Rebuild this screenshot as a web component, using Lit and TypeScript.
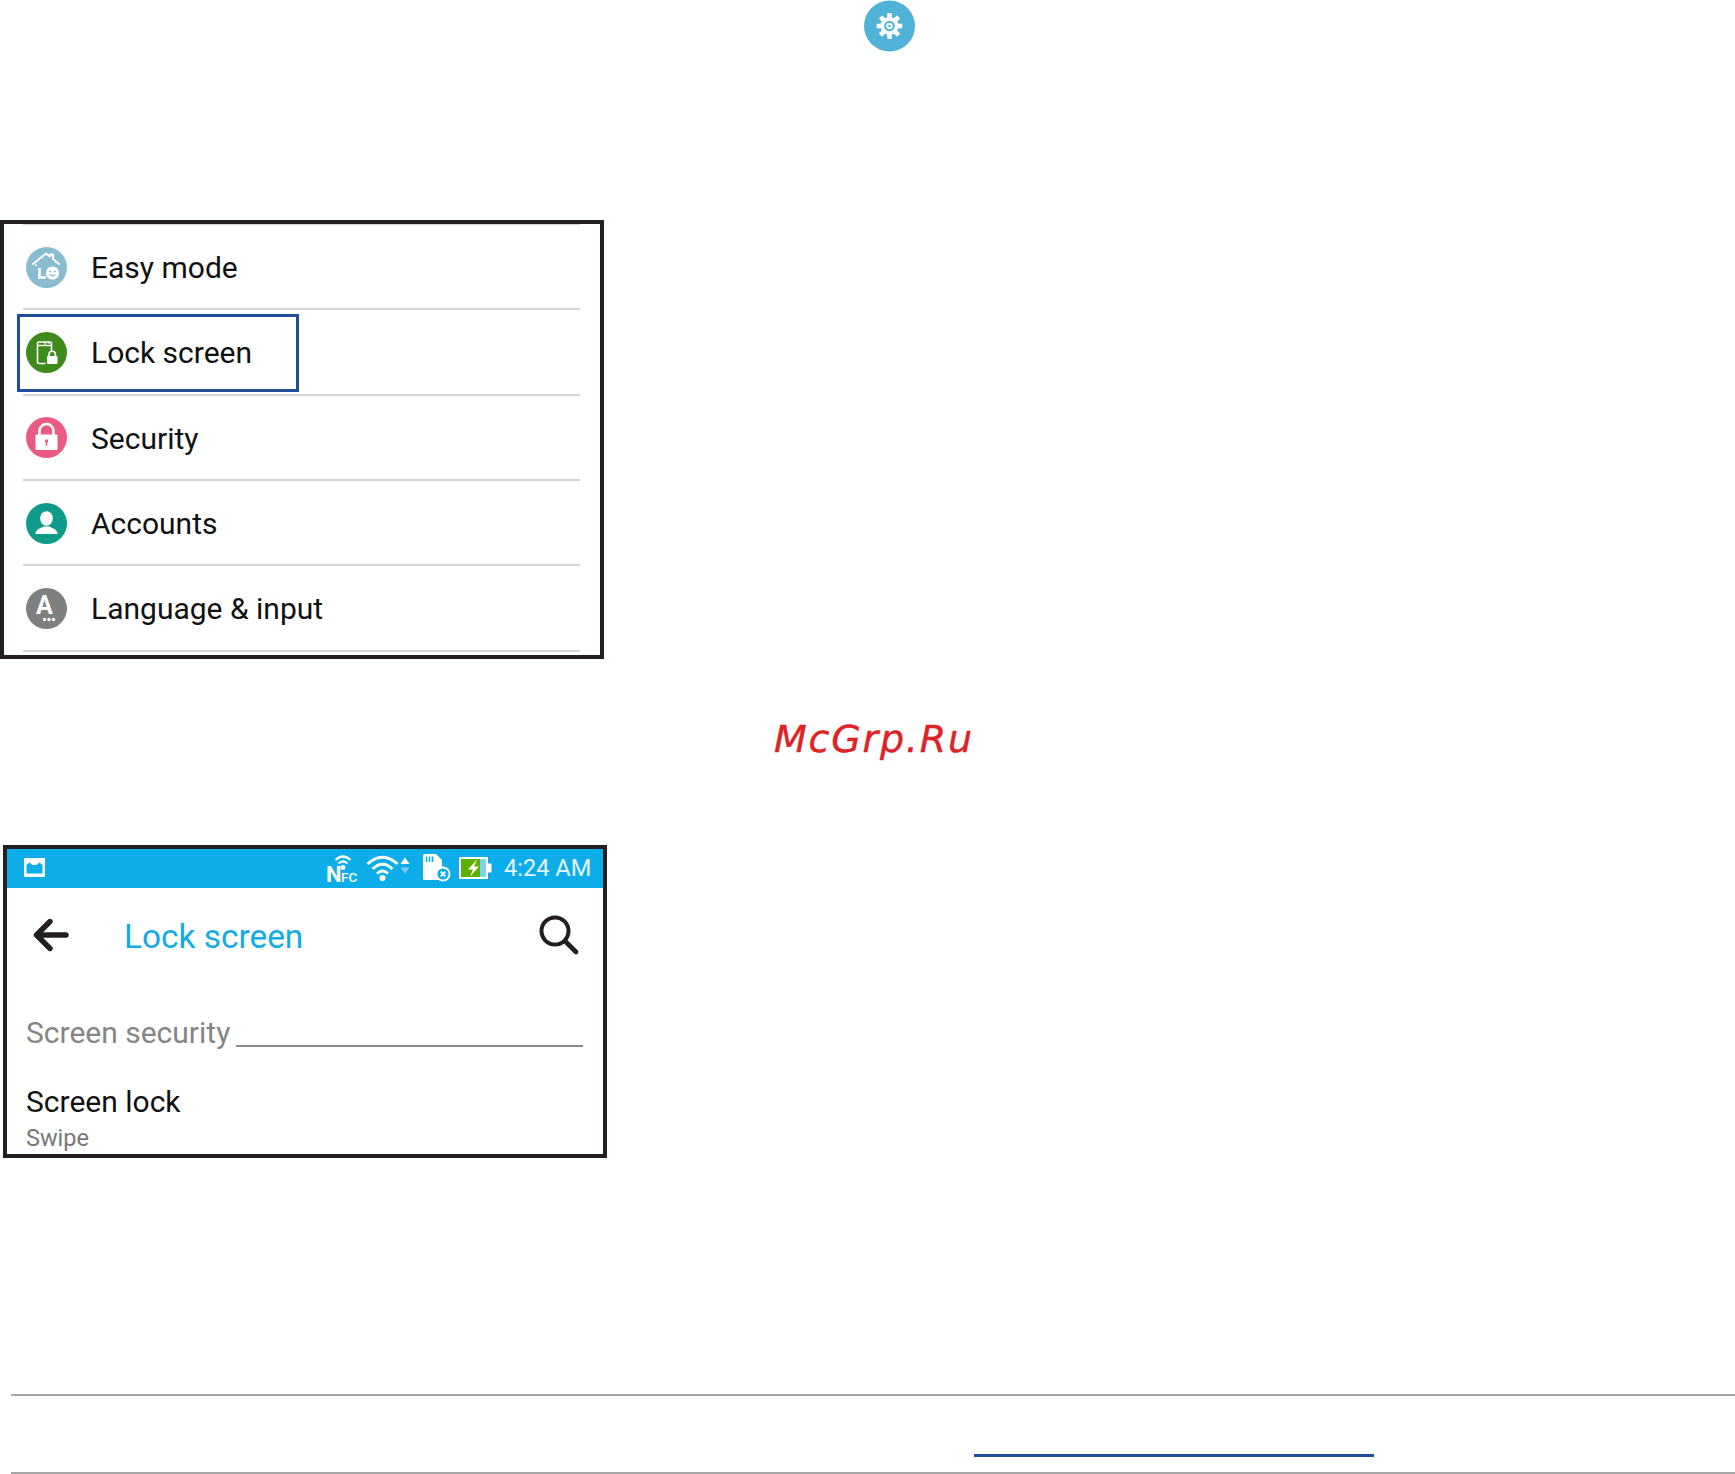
import { LitElement, html, css, svg } from "lit";
import { customElement } from "lit/decorators.js";

const teeth = [0, 45, 90, 135, 180, 225, 270, 315];

const icons: Record<string, unknown> = {
  easy: svg`<circle cx="20.5" cy="20.5" r="20.5" fill="#8abccf"/>
    <path d="M7 17 L20 6.5 L24 9.7 V7.5 H27 V12 L33 17" fill="none" stroke="#fff" stroke-width="2" stroke-linejoin="round" stroke-linecap="round"/>
    <path d="M10 17.5 V19 M30 15 V16" stroke="#fff" stroke-width="2"/>
    <path d="M13.5 21 V30.5 H20" fill="none" stroke="#fff" stroke-width="2.6"/>
    <circle cx="26.5" cy="26" r="6.6" fill="#fff"/>
    <circle cx="24.2" cy="24.6" r="1" fill="#8abccf"/><circle cx="28.8" cy="24.6" r="1" fill="#8abccf"/>
    <path d="M23.4 27.4 Q26.5 30.6 29.6 27.4" fill="none" stroke="#8abccf" stroke-width="1.3"/>`,
  lock: svg`<circle cx="20.5" cy="20.5" r="20.5" fill="#3f8a1d"/>
    <path d="M19.5 31.5 H13 A1.5 1.5 0 0 1 11.5 30 V11.5 A1.5 1.5 0 0 1 13 10 H24 A1.5 1.5 0 0 1 25.5 11.5 V19" fill="none" stroke="#fff" stroke-width="1.6"/>
    <path d="M12 13.5 H25" stroke="#fff" stroke-width="1.4"/>
    <path d="M21.5 10.8 H24 M18 11.8 H20" stroke="#fff" stroke-width="1.2"/>
    <rect x="21" y="24" width="10.5" height="8" rx="1" fill="#fff"/>
    <path d="M23 24.5 V22.5 A3.2 3.2 0 0 1 29.4 22.5 V24.5" fill="none" stroke="#fff" stroke-width="1.6"/>`,
  security: svg`<circle cx="20.5" cy="20.5" r="20.5" fill="#ea5a84"/>
    <rect x="9.5" y="17.5" width="22" height="15.5" rx="1" fill="#fff"/>
    <path d="M13.5 18 V14 A7 7 0 0 1 27.5 14 V18" fill="none" stroke="#fff" stroke-width="2.6"/>
    <circle cx="20.5" cy="24" r="1.7" fill="#ea5a84"/><rect x="19.7" y="24.5" width="1.6" height="4.2" fill="#ea5a84"/>`,
  accounts: svg`<circle cx="20.5" cy="20.5" r="20.5" fill="#0e9b8a"/>
    <ellipse cx="20.5" cy="15.5" rx="6.3" ry="7.3" fill="#fff"/>
    <path d="M9.5 31 C9.5 26.5 14 25.5 17.5 23.5 H23.5 C27 25.5 31.5 26.5 31.5 31 Z" fill="#fff"/>`,
  language: svg`<circle cx="20.5" cy="20.5" r="20.5" fill="#7d807e"/>
    <text x="18.5" y="26" text-anchor="middle" font-family="Roboto" font-weight="700" font-size="25" fill="#fff">A</text>
    <circle cx="18.5" cy="31.5" r="1.7" fill="#fff"/><circle cx="23" cy="31.5" r="1.7" fill="#fff"/><circle cx="27.5" cy="31.5" r="1.7" fill="#fff"/>`,
};

@customElement("app-root")
export class AppRoot extends LitElement {
  static styles = css`
    :host {
      display: block;
      width: 1735px;
      height: 1474px;
      overflow: hidden;
      background: #fff;
      font-family: Roboto, "Liberation Sans", sans-serif;
      color: #111;
    }
    .gear { display: block; margin-left: 864px; width: 51px; height: 52px; }
    .panel {
      box-sizing: border-box;
      width: 604px;
      border: 4px solid #231f20;
      background: #fff;
      position: relative;
    }
    .settings { margin-top: 168px; height: 439px; padding: 0 20px 0 19px; }
    .list { border-top: 1px solid #d4d4d4; }
    .row {
      box-sizing: border-box;
      height: 85.33px;
      border-bottom: 2px solid #d4d4d4;
      display: flex;
      align-items: center;
      padding-left: 3px;
      gap: 24px;
      font-size: 30px;
      line-height: 34px;
    }
    .row svg { width: 41px; height: 41px; flex: none; margin-top: 1px; }
    .row span { margin-top: 3px; }
    .mark {
      position: absolute;
      left: 13px;
      top: 90px;
      box-sizing: border-box;
      width: 282px;
      height: 78px;
      border: 3px solid #1f4e9a;
    }
    .watermark {
      margin: 57px 0 0 774px;
      font: oblique 38px/46px "DejaVu Sans", sans-serif;
      letter-spacing: 1.8px;
      -webkit-text-stroke: 0.4px #dd2326;
      color: #dd2326;
      height: 46px;
      white-space: nowrap;
    }
    .lock { margin: 83px 0 0 3px; height: 313px; }
    .status {
      box-sizing: border-box;
      height: 39px;
      padding-bottom: 2px;
      background: #0dade9;
      display: flex;
      align-items: center;
      color: #e4f5fc;
    }
    .status svg { display: block; flex: none; overflow: visible; }
    .time { font-size: 23.6px; line-height: 37px; margin: 2px 0 0 12px; white-space: nowrap; }
    .bar {
      height: 94px;
      display: flex;
      align-items: center;
      position: relative;
    }
    .bar .back { margin-left: 26px; }
    .title { margin: 4px 0 0 55px; font-size: 33.4px; line-height: 40px; color: #13abe4; flex: 1; }
    .bar .search { margin-right: 24px; }
    .section {
      margin: 34px 20px 0 19px;
      display: flex;
      font-size: 30px;
      line-height: 34px;
      color: #858585;
      height: 34px;
    }
    .section span { white-space: nowrap; }
    .section i { flex: 1; margin: 29px 0 0 6px; height: 2px; background: #8a8a8a; }
    .item { margin: 35px 0 0 19px; font-size: 30px; line-height: 34px; }
    .sub { margin: 5px 0 0 19px; font-size: 23.5px; line-height: 28px; color: #777; }
    .footer {
      box-sizing: border-box;
      margin: 236px 0 0 11px;
      height: 80px;
      border-top: 2px solid #a5a5a5;
      border-bottom: 2px solid #a5a5a5;
      padding: 58px 0 0 963px;
    }
    .footer div { width: 400px; height: 3px; background: #1f4e9a; }
  `;

  render() {
    const rows = [
      ["easy", "Easy mode"],
      ["lock", "Lock screen"],
      ["security", "Security"],
      ["accounts", "Accounts"],
      ["language", "Language & input"],
    ];
    return html`
      <svg class="gear" viewBox="0 0 51 52">
        <circle cx="25.5" cy="26" r="25.5" fill="#4fb2d6"/>
        ${teeth.map((a) => svg`<rect x="23.2" y="13.2" width="4.6" height="6" fill="#fff" transform="rotate(${a} 25.5 26)"/>`)}
        <circle cx="25.5" cy="26" r="9" fill="#fff"/>
        <circle cx="25.5" cy="26" r="5.3" fill="#4fb2d6"/>
        <circle cx="25.5" cy="26" r="3.2" fill="#fff"/>
        <circle cx="25.5" cy="26" r="1.3" fill="#4fb2d6"/>
      </svg>

      <section class="panel settings">
        <div class="list">
          ${rows.map(
            ([k, t]) => html`<div class="row"><svg viewBox="0 0 41 41">${icons[k]}</svg><span>${t}</span></div>`
          )}
        </div>
        <div class="mark"></div>
      </section>

      <div class="watermark">McGrp.Ru</div>

      <section class="panel lock">
        <div class="status">
          <svg style="margin-left:17px" width="21" height="19" viewBox="0 0 21 19">
            <path fill="#fff" fill-rule="evenodd" d="M0 0H21V19H0Z M2.5 15.5H18.5V7L15.5 4.5L12.5 7H8.5L5.5 4.5L2.5 7Z"/>
          </svg>
          <svg style="margin-left:281px" width="32" height="30" viewBox="0 0 32 30">
            <text x="0" y="28.5" font-family="Roboto" font-weight="700" font-size="22" fill="#fff">N</text>
            <text x="15" y="28.5" font-family="Roboto" font-weight="500" font-size="13.5" fill="#fff">FC</text>
            <path d="M9.5 7 Q17 0 24.5 7 M12.5 10.5 Q17 6.2 21.5 10.5" fill="none" stroke="#fff" stroke-width="2.2"/>
            <circle cx="17" cy="14.5" r="2.4" fill="#fff"/>
          </svg>
          <svg style="margin-left:8px" width="44" height="28" viewBox="0 0 44 28">
            <path d="M1.5 10 Q16.5 -3.5 31.5 10 M6.5 15 Q16.5 5.5 26.5 15 M11 19.5 Q16.5 14.5 22 19.5" fill="none" stroke="#fff" stroke-width="2.8"/>
            <circle cx="16.5" cy="24" r="3" fill="#fff"/>
            <path d="M34.5 10 L39 3.5 L43.5 10Z" fill="#fff"/>
            <path d="M34.5 13.5 L39 20 L43.5 13.5Z" fill="#7cc8ef"/>
          </svg>
          <svg style="margin-left:13px" width="28" height="27" viewBox="0 0 28 27">
            <path d="M0 1.5 Q0 0 1.5 0 H13 L19 6 V26 H1.5 Q0 26 0 24.5Z" fill="#fff"/>
            <path d="M3.5 2.5V8 M6.5 2.5V8 M9.5 2.5V8" stroke="#0dade9" stroke-width="1.6"/>
            <circle cx="20" cy="20" r="7.5" fill="#fff"/>
            <circle cx="20" cy="20" r="5.6" fill="#0dade9"/>
            <path d="M17.7 17.7 L22.3 22.3 M22.3 17.7 L17.7 22.3" stroke="#fff" stroke-width="1.8"/>
          </svg>
          <svg style="margin-left:8px" width="33" height="22" viewBox="0 0 33 22">
            <rect x="0" y="0" width="29" height="22" fill="#fff"/>
            <rect x="2" y="2" width="19" height="18" fill="#5fb000"/>
            <rect x="21" y="2" width="6" height="18" fill="#7fd0f2"/>
            <rect x="29" y="6.5" width="3.5" height="9" fill="#fff"/>
            <path d="M18 2.5 L9 12.5 H14 L11 19.5 L20 9.5 H15Z" fill="#fff"/>
          </svg>
          <span class="time">4:24 AM</span>
        </div>
        <div class="bar">
          <svg class="back" width="36" height="34" viewBox="0 0 36 34">
            <path d="M33 17 H4 M17 3.5 L3.5 17 L17 30.5" fill="none" stroke="#231f20" stroke-width="5.4" stroke-linecap="round" stroke-linejoin="round"/>
          </svg>
          <span class="title">Lock screen</span>
          <svg class="search" width="40" height="40" viewBox="0 0 40 40">
            <circle cx="16" cy="16" r="13.5" fill="none" stroke="#231f20" stroke-width="4"/>
            <path d="M26 26 L37 37" stroke="#231f20" stroke-width="4.6" stroke-linecap="round"/>
          </svg>
        </div>
        <div class="section"><span>Screen security</span><i></i></div>
        <div class="item">Screen lock</div>
        <div class="sub">Swipe</div>
      </section>

      <footer class="footer"><div></div></footer>
    `;
  }
}
